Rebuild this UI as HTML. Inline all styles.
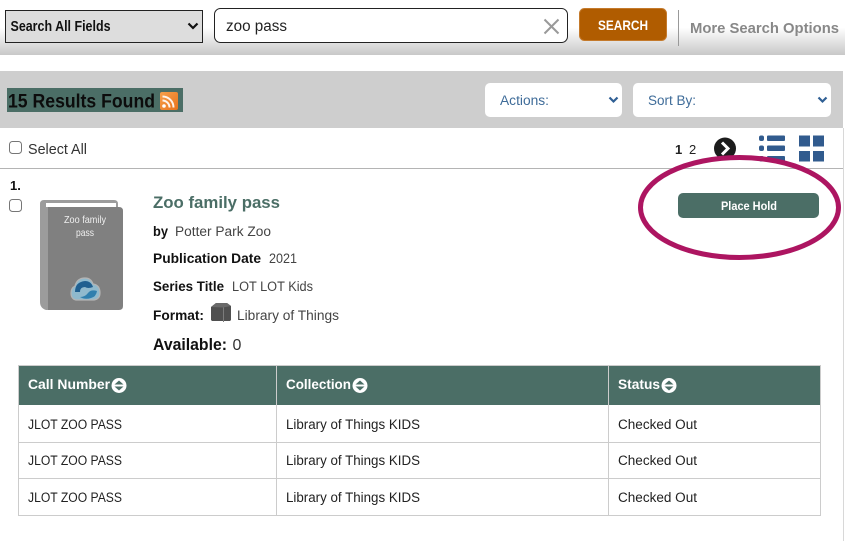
<!DOCTYPE html>
<html lang="en">
<head>
<meta charset="utf-8">
<title>Search results</title>
<style>
html,body{margin:0;padding:0;background:#fff;width:845px;height:541px;overflow:hidden}
svg{display:block}
text{font-family:"Liberation Sans",sans-serif;white-space:pre}
.b{font-weight:700}
.r{fill:#444;font-size:13.5px}
.c{fill:#222;font-size:13.5px}
.l{fill:#111;font-size:13.5px;font-weight:700}
.h{fill:#fff;font-size:13.5px;font-weight:700}
</style>
</head>
<body>
<svg width="845" height="541" viewBox="0 0 845 541" xmlns="http://www.w3.org/2000/svg">
<defs>
<linearGradient id="top" x1="0" y1="0" x2="0" y2="1">
<stop offset="0" stop-color="#fff"/><stop offset=".5" stop-color="#fff"/><stop offset="1" stop-color="#c8c8c8"/>
</linearGradient>
<linearGradient id="rss" x1="0" y1="0" x2="1" y2="1">
<stop offset="0" stop-color="#f7a04c"/><stop offset="1" stop-color="#e8731c"/>
</linearGradient>
</defs>

<!-- top search bar -->
<rect x="0" y="0" width="845" height="55" fill="url(#top)"/>
<rect x="5.5" y="10.5" width="197" height="32" fill="#ddd" stroke="#222"/>
<text x="10.5" y="31" class="b" font-size="14.5" fill="#111" textLength="100" lengthAdjust="spacingAndGlyphs">Search All Fields</text>
<path d="M188.500 23.500l4.500 4.500 4.500-4.500" fill="none" stroke="#111" stroke-width="2.200"/>
<rect x="214.500" y="8.500" width="353" height="34" rx="6" fill="#fff" stroke="#222"/>
<text x="226" y="31" font-size="15.500" fill="#222" textLength="61" lengthAdjust="spacingAndGlyphs">zoo pass</text>
<path d="M544.500 19.500l14 14m0-14l-14 14" fill="none" stroke="#999" stroke-width="2"/>
<rect x="579.500" y="8.500" width="87" height="32" rx="5" fill="#b05c00" stroke="#c47a2c"/>
<text x="598" y="30" class="b" font-size="14" fill="#fff" textLength="50" lengthAdjust="spacingAndGlyphs">SEARCH</text>
<rect x="678" y="10" width="1" height="36" fill="#999"/>
<text x="690" y="33" class="b" font-size="15" fill="#888" textLength="149" lengthAdjust="spacingAndGlyphs">More Search Options</text>

<!-- results band -->
<rect x="0" y="71" width="843" height="57" fill="#cecece"/>
<rect x="7" y="88" width="176" height="24" fill="#4b6e66"/>
<text x="8" y="107.500" class="b" font-size="19.500" fill="#0c0c0c" textLength="147" lengthAdjust="spacingAndGlyphs">15 Results Found</text>
<rect x="160" y="92" width="18" height="18" rx="2" fill="url(#rss)"/>
<circle cx="164" cy="106" r="1.800" fill="#fff"/>
<path d="M162.500 100.500a7 7 0 0 1 7 7M162.500 96.500a11 11 0 0 1 11 11" fill="none" stroke="#fff" stroke-width="2" opacity=".9"/>
<rect x="485" y="83" width="137" height="34" rx="5" fill="#fff"/>
<text x="500" y="105" font-size="13.500" fill="#3f6c99" textLength="49" lengthAdjust="spacingAndGlyphs">Actions:</text>
<path d="M609.500 97.500l4 4 4-4" fill="none" stroke="#2f5f94" stroke-width="2.200"/>
<rect x="633" y="83" width="198" height="34" rx="5" fill="#fff"/>
<text x="648" y="105" font-size="13.500" fill="#3f6c99" textLength="48" lengthAdjust="spacingAndGlyphs">Sort By:</text>
<path d="M818.500 97.500l4 4 4-4" fill="none" stroke="#2f5f94" stroke-width="2.200"/>

<rect x="843" y="128" width="1" height="413" fill="#d8d8d8"/>

<!-- select all / pagination -->
<rect x="9.500" y="141.500" width="12" height="12" rx="3" fill="#fff" stroke="#767676"/>
<text x="28" y="154" font-size="14.500" fill="#333" textLength="59" lengthAdjust="spacingAndGlyphs">Select All</text>
<text x="675" y="154" class="b" font-size="13" fill="#222">1</text>
<text x="689" y="154" font-size="13" fill="#222">2</text>
<circle cx="725" cy="148.500" r="11" fill="#1c1c1c"/>
<path d="M722 142.500l6 6-6 6" fill="none" stroke="#fff" stroke-width="3"/>
<g fill="#315b8e">
<rect x="759" y="135.500" width="5" height="5.500" rx="2"/><rect x="767" y="135.500" width="18" height="5.500" rx="1"/>
<rect x="759" y="145.500" width="5" height="5.500" rx="2"/><rect x="767" y="145.500" width="18" height="5.500" rx="1"/>
<rect x="759" y="156" width="5" height="5.500" rx="2"/><rect x="767" y="156" width="18" height="5.500" rx="1"/>
<rect x="799" y="135.500" width="11" height="11"/><rect x="813" y="135.500" width="11" height="11"/>
<rect x="799" y="151" width="11" height="10.500"/><rect x="813" y="151" width="11" height="10.500"/>
</g>
<rect x="0" y="168" width="843" height="1" fill="#b4b4b4"/>

<!-- item -->
<text x="10" y="190" class="b" font-size="13" fill="#111">1.</text>
<rect x="9.500" y="199.500" width="12" height="12" rx="3" fill="#fff" stroke="#767676"/>

<path d="M40 204q0-4 4-4h70q4 0 4 4v6H48v100h-2q-6-2-6-8z" fill="#9c9c9c"/>
<rect x="46" y="203" width="70" height="4" fill="#fff"/>
<path d="M48 207h71q4 0 4 4v95q0 4-4 4H48z" fill="#808080"/>
<text x="85" y="223" font-size="10.500" fill="#eee" text-anchor="middle" textLength="42" lengthAdjust="spacingAndGlyphs">Zoo family</text>
<text x="85" y="236" font-size="10.500" fill="#eee" text-anchor="middle" textLength="18" lengthAdjust="spacingAndGlyphs">pass</text>
<path d="M76 300q-5-1-5-7 0-5 4-7 2-8 10-8 6 0 8 6 7 1 7 9 0 6-6 7z" fill="#8fb9cd" stroke="#b4b4b4" stroke-width="1.200"/>
<path d="M75 292q0-10 10-11 6 0 8 6-5 2-8 0-5 0-5 5z" fill="#1f5f90"/>
<path d="M80 297q5 0 8-4 3-4 9-2-1 6-6 7-6 2-11-1z" fill="#2f7fae"/>

<text x="153" y="208" class="b" font-size="17" fill="#4b6e66" textLength="127" lengthAdjust="spacingAndGlyphs">Zoo family pass</text>
<text x="153" y="236" class="l" textLength="15" lengthAdjust="spacingAndGlyphs">by</text>
<text x="175" y="236" class="r" textLength="96" lengthAdjust="spacingAndGlyphs">Potter Park Zoo</text>
<text x="153" y="263" class="l" textLength="108" lengthAdjust="spacingAndGlyphs">Publication Date</text>
<text x="269" y="263" class="r" textLength="28" lengthAdjust="spacingAndGlyphs">2021</text>
<text x="153" y="291" class="l" textLength="71" lengthAdjust="spacingAndGlyphs">Series Title</text>
<text x="232" y="291" class="r" textLength="81" lengthAdjust="spacingAndGlyphs">LOT LOT Kids</text>
<text x="153" y="320" class="l" textLength="51" lengthAdjust="spacingAndGlyphs">Format:</text>
<path d="M211 307l5-4h11l4 3v14l-1 1h-18l-1-1z" fill="#505050"/>
<path d="M211 307l5-4h11l4 3-8 1.500z" fill="#6a6a6a"/>
<path d="M223.500 307.500V322" stroke="#7c7c7c" stroke-width="1"/>
<text x="237" y="320" class="r" textLength="102" lengthAdjust="spacingAndGlyphs">Library of Things</text>
<text x="153" y="350" class="b" font-size="16.500" fill="#111" textLength="74" lengthAdjust="spacingAndGlyphs">Available:</text>
<text x="232.500" y="350" font-size="16" fill="#333">0</text>

<!-- place hold -->
<rect x="678" y="193" width="141" height="25" rx="5" fill="#4b6e66"/>
<text x="721" y="210" class="b" font-size="12" fill="#fff" textLength="56" lengthAdjust="spacingAndGlyphs">Place Hold</text>
<ellipse cx="739.500" cy="207.500" rx="99" ry="50" fill="none" stroke="#ad1561" stroke-width="5"/>

<!-- table -->
<rect x="18.500" y="365.500" width="802" height="150" fill="#fff" stroke="#ccc"/>
<rect x="19" y="366" width="801" height="39" fill="#4b6e66"/>
<path d="M19 442.500h801M19 478.500h801" stroke="#ccc"/>
<path d="M276.500 366v149M608.500 366v149" stroke="#ccc"/>
<text x="28" y="389" class="h" textLength="82" lengthAdjust="spacingAndGlyphs">Call Number</text>
<text x="286" y="389" class="h" textLength="65" lengthAdjust="spacingAndGlyphs">Collection</text>
<text x="618" y="389" class="h" textLength="42" lengthAdjust="spacingAndGlyphs">Status</text>
<g>
<circle cx="119" cy="385.500" r="7.500" fill="#fff"/><path d="M114.500 384.500l4.500-4 4.500 4zM114.500 386.500l4.500 4 4.500-4z" fill="#4b6e66"/>
<circle cx="360" cy="385.500" r="7.500" fill="#fff"/><path d="M355.500 384.500l4.500-4 4.500 4zM355.500 386.500l4.500 4 4.500-4z" fill="#4b6e66"/>
<circle cx="669" cy="385.500" r="7.500" fill="#fff"/><path d="M664.500 384.500l4.500-4 4.500 4zM664.500 386.500l4.500 4 4.500-4z" fill="#4b6e66"/>
</g>

<text x="28" y="429" class="c" textLength="94" lengthAdjust="spacingAndGlyphs">JLOT ZOO PASS</text>
<text x="286" y="429" class="c" textLength="134" lengthAdjust="spacingAndGlyphs">Library of Things KIDS</text>
<text x="618" y="429" class="c" textLength="79" lengthAdjust="spacingAndGlyphs">Checked Out</text>
<text x="28" y="465" class="c" textLength="94" lengthAdjust="spacingAndGlyphs">JLOT ZOO PASS</text>
<text x="286" y="465" class="c" textLength="134" lengthAdjust="spacingAndGlyphs">Library of Things KIDS</text>
<text x="618" y="465" class="c" textLength="79" lengthAdjust="spacingAndGlyphs">Checked Out</text>
<text x="28" y="502" class="c" textLength="94" lengthAdjust="spacingAndGlyphs">JLOT ZOO PASS</text>
<text x="286" y="502" class="c" textLength="134" lengthAdjust="spacingAndGlyphs">Library of Things KIDS</text>
<text x="618" y="502" class="c" textLength="79" lengthAdjust="spacingAndGlyphs">Checked Out</text>
</svg>
</body>
</html>
